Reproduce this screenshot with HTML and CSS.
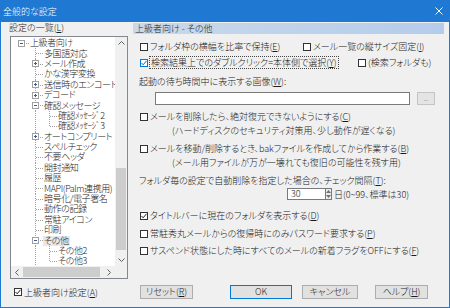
FILE: index.html
```html
<!DOCTYPE html>
<html lang="ja">
<head>
  <meta charset="UTF-8">
  <title>全般的な設定</title>
  <link rel="stylesheet" href="styles.css">
</head>
<body>
<div class="window">
  <div class="titlebar">
    <span class="title">全般的な設定</span>
    <svg class="close" width="8" height="8" viewBox="0 0 8 8"><path d="M0.5 0.5L7.5 7.5M7.5 0.5L0.5 7.5" stroke="#fff" stroke-width="1"/></svg>
  </div>

  <div class="main">
    <div class="left">
      <div class="list-label">設定の一覧(<u>L</u>)</div>
      <div class="tree">
        <div class="tree-items">
          <div class="row"><span class="c rt"><span class="box minus"></span></span><span class="txt">上級者向け</span></div>
          <div class="row"><span class="c"></span><span class="c t"></span><span class="txt">多国語対応</span></div>
          <div class="row"><span class="c"></span><span class="c t"><span class="box plus"></span></span><span class="txt">メール作成</span></div>
          <div class="row"><span class="c"></span><span class="c t"></span><span class="txt">かな漢字変換</span></div>
          <div class="row"><span class="c"></span><span class="c t"><span class="box plus"></span></span><span class="txt">送信時のエンコード</span></div>
          <div class="row"><span class="c"></span><span class="c t"><span class="box plus"></span></span><span class="txt">デコード</span></div>
          <div class="row"><span class="c"></span><span class="c t"><span class="box minus"></span></span><span class="txt">確認メッセージ</span></div>
          <div class="row"><span class="c"></span><span class="c v"></span><span class="c t"></span><span class="txt">確認ﾒｯｾｰｼﾞ2</span></div>
          <div class="row"><span class="c"></span><span class="c v"></span><span class="c l"></span><span class="txt">確認ﾒｯｾｰｼﾞ3</span></div>
          <div class="row"><span class="c"></span><span class="c t"><span class="box plus"></span></span><span class="txt">オートコンプリート</span></div>
          <div class="row"><span class="c"></span><span class="c t"></span><span class="txt">スペルチェック</span></div>
          <div class="row"><span class="c"></span><span class="c t"></span><span class="txt">不要ヘッダ</span></div>
          <div class="row"><span class="c"></span><span class="c t"></span><span class="txt">開封通知</span></div>
          <div class="row"><span class="c"></span><span class="c t"></span><span class="txt">履歴</span></div>
          <div class="row"><span class="c"></span><span class="c t"></span><span class="txt">MAPI(Palm連携用)</span></div>
          <div class="row"><span class="c"></span><span class="c t"></span><span class="txt">暗号化/電子署名</span></div>
          <div class="row"><span class="c"></span><span class="c t"></span><span class="txt">動作の記録</span></div>
          <div class="row"><span class="c"></span><span class="c t"></span><span class="txt">常駐アイコン</span></div>
          <div class="row"><span class="c"></span><span class="c t"></span><span class="txt">印刷</span></div>
          <div class="row"><span class="c"></span><span class="c t"><span class="box minus"></span></span><span class="txt sel">その他</span></div>
          <div class="row"><span class="c"></span><span class="c v"></span><span class="c t"></span><span class="txt">その他2</span></div>
          <div class="row"><span class="c"></span><span class="c v"></span><span class="c l"></span><span class="txt">その他3</span></div>
          <div class="row"><span class="c"></span><span class="c v"></span><span class="txt"></span></div>
        </div>
        <div class="vscroll">
          <span class="arrow"><svg width="7" height="4" viewBox="0 0 7 4"><path d="M0.5 3.5L3.5 0.5L6.5 3.5" fill="none" stroke="#606060"/></svg></span>
          <span class="vthumb"></span>
          <span class="arrow end"><svg width="7" height="4" viewBox="0 0 7 4"><path d="M0.5 0.5L3.5 3.5L6.5 0.5" fill="none" stroke="#606060"/></svg></span>
        </div>
        <div class="hscroll">
          <span class="arrow"><svg width="4" height="7" viewBox="0 0 4 7"><path d="M3.5 0.5L0.5 3.5L3.5 6.5" fill="none" stroke="#606060"/></svg></span>
          <span class="hthumb"></span>
          <span class="arrow end"><svg width="4" height="7" viewBox="0 0 4 7"><path d="M0.5 0.5L3.5 3.5L0.5 6.5" fill="none" stroke="#606060"/></svg></span>
        </div>
        <div class="corner"></div>
      </div>
    </div>

    <div class="right">
      <div class="panel-head">上級者向け - その他</div>
      <div class="panel-body">
        <div class="line mt7">
          <label class="chk w163"><span class="cb"></span>フォルダ枠の横幅を比率で保持(<u>E</u>)</label>
          <label class="chk"><span class="cb"></span>メール一覧の縦サイズ固定(<u>I</u>)</label>
        </div>
        <div class="line mt5">
          <label class="chk w218"><span class="cb focus-cb"><svg width="6" height="6" viewBox="0 0 6 6"><path d="M0.5 3L2.2 4.8L5.5 0.8" fill="none" stroke="#0078d7" stroke-width="1"/></svg></span><span class="focus">検索結果上でのダブルクリック=本体側で選択(<u>Y</u>)</span></label>
          <label class="chk"><span class="cb"></span>(検索フォルダも)</label>
        </div>
        <div class="line mt8 lbl">起動の待ち時間中に表示する画像(<u>W</u>):</div>
        <div class="file-row mt5">
          <span class="field"></span>
          <span class="browse">...</span>
        </div>
        <div class="line mt6">
          <label class="chk"><span class="cb"></span>メールを削除したら、絶対復元できないようにする(<u>C</u>)</label>
        </div>
        <div class="line mt3 sub">(ハードディスクのセキュリティ対策用、少し動作が遅くなる)</div>
        <div class="line mt7">
          <label class="chk"><span class="cb"></span>メールを移動/削除するとき、bakファイルを作成してから作業する(<u>B</u>)</label>
        </div>
        <div class="line mt3 sub">(メール用ファイルが万が一壊れても復旧の可能性を残す用)</div>
        <div class="line mt7 lbl">フォルダ毎の設定で自動削除を指定した場合の、チェック間隔(<u>T</u>):</div>
        <div class="spin-row">
          <span class="spin">30</span>
          <span class="spin-btn">
            <svg width="5" height="3" viewBox="0 0 5 3"><path d="M0 3L2.5 0L5 3Z" fill="#707070"/></svg>
            <svg width="5" height="3" viewBox="0 0 5 3"><path d="M0 0L2.5 3L5 0Z" fill="#707070"/></svg>
          </span>
          <span class="unit">日(0~99、標準は30)</span>
        </div>
        <div class="line mt10">
          <label class="chk"><span class="cb"><svg width="6" height="6" viewBox="0 0 6 6"><path d="M0.5 3L2.2 4.8L5.5 0.8" fill="none" stroke="#222" stroke-width="1"/></svg></span>タイトルバーに現在のフォルダを表示する(<u>D</u>)</label>
        </div>
        <div class="line mt7">
          <label class="chk"><span class="cb"></span>常駐秀丸メールからの復帰時にのみパスワード要求する(<u>P</u>)</label>
        </div>
        <div class="line mt6">
          <label class="chk"><span class="cb"></span>サスペンド状態にした時にすべてのメールの新着フラグをOFFにする(<u>F</u>)</label>
        </div>
      </div>
    </div>
  </div>

  <div class="footer">
    <label class="chk foot-chk"><span class="cb"><svg width="6" height="6" viewBox="0 0 6 6"><path d="M0.5 3L2.2 4.8L5.5 0.8" fill="none" stroke="#222" stroke-width="1"/></svg></span>上級者向け設定(<u>A</u>)</label>
    <button class="btn reset">リセット(<u>R</u>)</button>
    <button class="btn ok">OK</button>
    <button class="btn cancel">キャンセル</button>
    <button class="btn help">ヘルプ(<u>H</u>)</button>
  </div>
</div>
</body>
</html>
```

FILE: styles.css
```css
* {
  box-sizing: border-box;
}
body {
  margin: 0;
  font-family: "Noto Sans CJK JP", "Liberation Sans", sans-serif;
  font-size: 9px;
  font-weight: 300;
  line-height: 11px;
  color: #1a1a1a;
  font-feature-settings: "palt";
}
u {
  text-decoration-thickness: 1px;
  text-underline-offset: 1px;
}
.window {
  width: 450px;
  height: 308px;
  background: #f0f0f0;
  border: 1px solid #1f78d1;
  border-top: none;
  display: flex;
  flex-direction: column;
}
.titlebar {
  height: 22px;
  flex: none;
  background: #1f78d1;
  color: #fff;
  display: flex;
  align-items: center;
  justify-content: space-between;
  padding: 0 7px 0 3px;
  margin: 0 -1px;
}
.title {
  font-size: 9px;
}

/* main area */
.main {
  display: flex;
  height: 257px;
  flex: none;
}
.left {
  width: 127px;
  padding-left: 8px;
  display: flex;
  flex-direction: column;
}
.list-label {
  height: 11px;
}
.tree {
  margin-top: 3px;
  margin-left: 1px;
  width: 118px;
  height: 243px;
  border: 1px solid #828790;
  background: #fff;
  display: grid;
  grid-template-columns: 104px 12px;
  grid-template-rows: 229px 12px;
}
.tree-items {
  overflow: hidden;
  padding: 1px 0 0 4px;
}
.row {
  display: flex;
  align-items: center;
  height: 10.4px;
  line-height: 10px;
  white-space: nowrap;
  letter-spacing: -0.4px;
}
.c {
  width: 14px;
  height: 100%;
  flex: none;
  display: flex;
  align-items: center;
  padding-left: 3px;
  background-repeat: no-repeat;
}
.v {
  background-image: repeating-linear-gradient(#a0a0a0 0 1px, transparent 1px 2px);
  background-size: 1px 100%;
  background-position: 6px 0;
}
.t {
  background-image: repeating-linear-gradient(#a0a0a0 0 1px, transparent 1px 2px),
    repeating-linear-gradient(to right, #a0a0a0 0 1px, transparent 1px 2px);
  background-size: 1px 100%, 7px 1px;
  background-position: 6px 0, 7px 5px;
}
.l {
  background-image: repeating-linear-gradient(#a0a0a0 0 1px, transparent 1px 2px),
    repeating-linear-gradient(to right, #a0a0a0 0 1px, transparent 1px 2px);
  background-size: 1px 5px, 7px 1px;
  background-position: 6px 0, 7px 5px;
}
.rt {
  background-image: repeating-linear-gradient(to right, #a0a0a0 0 1px, transparent 1px 2px);
  background-size: 5px 1px;
  background-position: 9px 5px;
}
.box {
  width: 7px;
  height: 7px;
  border: 1px solid #a0a0a0;
  background-color: #fff;
  background-repeat: no-repeat;
}
.box.minus {
  background-image: linear-gradient(#3c5d96, #3c5d96);
  background-size: 3px 1px;
  background-position: center;
}
.box.plus {
  background-image: linear-gradient(#3c5d96, #3c5d96), linear-gradient(#3c5d96, #3c5d96);
  background-size: 3px 1px, 1px 3px;
  background-position: center, center;
}
.txt {
  padding: 0 1px;
}
.txt.sel {
  background: #e8e8e8;
}
.vscroll {
  background: #f0f0f0;
  display: flex;
  flex-direction: column;
}
.hscroll {
  background: #f0f0f0;
  display: flex;
}
.corner {
  background: #f0f0f0;
}
.arrow {
  width: 12px;
  height: 12px;
  flex: none;
  display: flex;
  align-items: center;
  justify-content: center;
}
.vscroll .arrow.end {
  margin-top: auto;
}
.hscroll .arrow.end {
  margin-left: auto;
}
.vthumb {
  margin: 119px 1px 0;
  height: 82px;
  background: #cdcdcd;
}
.hthumb {
  margin: 1px 0;
  width: 77px;
  background: #cdcdcd;
}

/* right panel */
.right {
  margin-left: 5px;
  width: 311px;
}
.panel-head {
  margin-top: 1px;
  height: 11px;
  padding-left: 2px;
  background: linear-gradient(to right, #cad9ea, #b4cceb);
  color: #1a1a1a;
}
.panel-body {
  padding-left: 7px;
}
.line {
  display: flex;
  height: 11px;
  align-items: center;
  white-space: nowrap;
}
.lbl {
  margin-left: -1px;
}
.sub {
  padding-left: 32px;
}
.mt3 { margin-top: 3px; }
.mt5 { margin-top: 5px; }
.mt6 { margin-top: 6px; }
.mt7 { margin-top: 7px; }
.mt8 { margin-top: 8px; }
.mt10 { margin-top: 10px; }
.w163 { width: 163px; }
.w218 { width: 218px; }
.chk {
  display: flex;
  align-items: center;
  white-space: nowrap;
}
.cb {
  width: 8px;
  height: 8px;
  flex: none;
  border: 1px solid #333;
  background: #fff;
  margin-right: 2px;
  display: flex;
  align-items: center;
  justify-content: center;
}
.cb.focus-cb {
  border-color: #0078d7;
}
.focus {
  outline: 1px dotted #444;
  outline-offset: 0;
  padding: 0 1px;
}
.file-row {
  display: flex;
  height: 13px;
  padding-left: 15px;
}
.field {
  width: 255px;
  border: 1px solid #7a7a7a;
  background: #fff;
}
.browse {
  margin-left: 7px;
  width: 18px;
  border: 1px solid #c4c4c4;
  background: #e4e4e4;
  color: #777;
  font-size: 6px;
  line-height: 6px;
  display: flex;
  align-items: flex-end;
  justify-content: center;
  padding-bottom: 2px;
}
.spin-row {
  display: flex;
  align-items: center;
  height: 12px;
  margin-top: 2px;
  padding-left: 147px;
}
.spin {
  width: 38px;
  height: 12px;
  border: 1px solid #7a7a7a;
  border-right: none;
  background: #fff;
  padding-left: 3px;
  line-height: 10px;
}
.spin-btn {
  width: 7px;
  height: 12px;
  border: 1px solid #7a7a7a;
  background: #ececec;
  display: flex;
  flex-direction: column;
  align-items: center;
  justify-content: space-around;
}
.unit {
  margin-left: 2px;
}

/* footer */
.footer {
  display: flex;
  align-items: center;
  height: 14px;
  margin-top: 6px;
  padding-left: 13px;
}
.foot-chk {
  width: 126px;
}
.btn {
  height: 14px;
  padding: 0;
  border: 1px solid #adadad;
  background: #e1e1e1;
  font-family: inherit;
  font-size: 9px;
  font-weight: 300;
  line-height: 12px;
  color: #1a1a1a;
  font-feature-settings: "palt";
}
.reset {
  width: 53px;
}
.ok {
  width: 62px;
  margin-left: 37px;
  border-color: #0078d7;
}
.cancel {
  width: 56px;
  margin-left: 10px;
}
.help {
  width: 53px;
  margin-left: 17px;
}
```
